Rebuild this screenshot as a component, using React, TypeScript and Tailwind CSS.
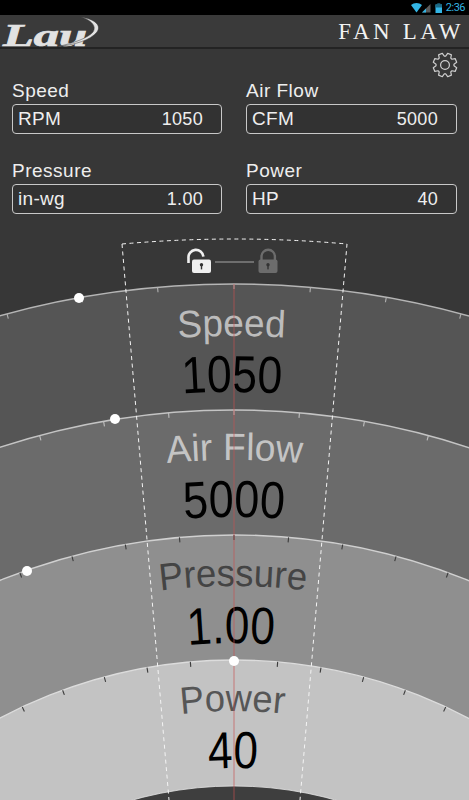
const CX = 234;
const CY = 1161;

const BANDS = [
  { r: 877, fill: "#555555", line: "#b5b5b5", tick: "#b0b0b0", label: "Speed", value: "1050", labelColor: "#bcbcbc", lb: 336, vb: 392, dot: [79, 298], lw: 107, vw: 99, lc: 231.5, vc: 232 },
  { r: 751, fill: "#6b6b6b", line: "#c4c4c4", tick: "#c0c0c0", label: "Air Flow", value: "5000", labelColor: "#c4c4c4", lb: 460, vb: 517, dot: [115, 419], lw: 135, vw: 100, lc: 234.5, vc: 234 },
  { r: 626, fill: "#8f8f8f", line: "#d0d0d0", tick: "#3c3c3c", label: "Pressure", value: "1.00", labelColor: "#444444", lb: 586, vb: 643, dot: [27, 571], lw: 146, vw: 86, lc: 233, vc: 231 },
  { r: 501, fill: "#c3c3c3", line: "#dcdcdc", tick: "#3c3c3c", label: "Power", value: "40", labelColor: "#565656", lb: 711, vb: 768, dot: [234, 661], lw: 103, vw: 49, lc: 232.5, vc: 233 },
];

function ticks(r: number) {
  const out: { x1: number; y1: number; x2: number; y2: number }[] = [];
  for (let d = -45; d <= 45; d += 5) {
    const a = (d * Math.PI) / 180;
    const s = Math.sin(a);
    const c = Math.cos(a);
    out.push({ x1: CX + r * s, y1: CY - r * c, x2: CX + (r - 5) * s, y2: CY - (r - 5) * c });
  }
  return out;
}

function arcPath(r: number) {
  const a = (40 * Math.PI) / 180;
  const s = r * Math.sin(a);
  const c = r * Math.cos(a);
  return `M ${CX - s} ${CY - c} A ${r} ${r} 0 0 1 ${CX + s} ${CY - c}`;
}

function rot(center: number, baseline: number) {
  const deg = (Math.atan((center - CX) / (CY - baseline)) * 180) / Math.PI;
  return `rotate(${deg} ${CX} ${CY})`;
}

function gearPath(cx: number, cy: number) {
  const teeth = 8;
  const ro = 12;
  const ri = 9;
  let d = "";
  for (let i = 0; i < teeth; i++) {
    const base = (i * 2 * Math.PI) / teeth + Math.PI / 8;
    const pts: [number, number][] = [
      [ri, base - 0.3],
      [ro, base - 0.17],
      [ro, base + 0.17],
      [ri, base + 0.3],
    ];
    pts.forEach(([r, a], j) => {
      const x = (cx + r * Math.cos(a)).toFixed(2);
      const y = (cy + r * Math.sin(a)).toFixed(2);
      d += `${i === 0 && j === 0 ? "M" : "L"}${x} ${y} `;
    });
  }
  return d + "Z";
}

function Field({ label, unit, value }: { label: string; unit: string; value: string }) {
  return (
    <div>
      <div className="h-6 text-[19px] leading-[22px] tracking-[0.5px] text-[#eeeeee] [font-family:'Liberation_Sans',sans-serif]">{label}</div>
      <div className="flex h-[30px] items-center justify-between rounded-[4px] border-[1.5px] border-[#c8c8c8] bg-[#323232] pl-[5px] pr-[18px] text-[#eeeeee] [font-family:'Liberation_Sans',sans-serif]">
        <span className="text-[19px] tracking-[0.3px]">{unit}</span>
        <span className="text-[18px] tracking-[0.3px]">{value}</span>
      </div>
    </div>
  );
}

function Lock({ open, color, hole }: { open: boolean; color: string; hole: string }) {
  return open ? (
    <g>
      <path d="M188.5 263 v-5 a7.4 7.4 0 0 1 14.8 -1.4" fill="none" stroke={color} strokeWidth="2.6" />
      <rect x="192" y="259.5" width="19" height="13.5" rx="2" fill={color} />
      <circle cx="201.5" cy="264.8" r="1.7" fill={hole} />
      <rect x="200.8" y="265" width="1.4" height="4.4" fill={hole} />
    </g>
  ) : (
    <g>
      <path d="M261.5 260 v-3.5 a6.7 6.7 0 0 1 13.4 0 V260" fill="none" stroke={color} strokeWidth="2.4" />
      <rect x="258.5" y="259.5" width="19" height="13.5" rx="2" fill={color} />
      <circle cx="268" cy="264.8" r="1.7" fill={hole} />
      <rect x="267.3" y="265" width="1.4" height="4.4" fill={hole} />
    </g>
  );
}

export default function App() {
  return (
    <div className="flex h-[800px] w-[469px] flex-col overflow-hidden bg-[#373737]">
      {/* status bar */}
      <div className="relative z-10 flex h-[15px] items-center justify-end gap-[3px] bg-black pr-[4px]">
        <svg width="32" height="13" viewBox="0 0 32 13">
          <path d="M0 4 A8.5 8.5 0 0 1 11 4 L5.5 11.5 Z" fill="#33b5e5" />
          <path d="M19.5 3 V11.5 H11 Z" fill="#5a5a5a" />
          <path d="M15 11.5 H11 L15 7.5 Z" fill="#33b5e5" />
          <rect x="24.5" y="3.5" width="6.5" height="8.5" fill="#33b5e5" />
          <rect x="24.5" y="3.5" width="6.5" height="3" fill="#1d6a86" />
          <rect x="26.3" y="2.3" width="3" height="1.2" fill="#1d6a86" />
        </svg>
        <span className="text-[11px] leading-none tracking-[-0.5px] text-[#33b5e5] [font-family:Roboto,sans-serif]">2:36</span>
      </div>

      {/* title bar */}
      <div className="flex h-[34px] items-center justify-between border-b-2 border-[#232323] bg-[#3a3a3a] pr-[5px]">
        <svg width="102" height="46" viewBox="0 8 102 46" className="-my-[7px] shrink-0">
          <text x="3" y="46" fontFamily="'Liberation Serif', serif" fontWeight="700" fontStyle="italic" fontSize="31" fill="#e2e2e2" stroke="#e2e2e2" strokeWidth="0.7" textLength="84" lengthAdjust="spacingAndGlyphs">
            Lau
          </text>
          <path d="M81 17 C94 19 102 25 97 32 C91 40 74 45 58 46.5 C74 43 88 38 93 32 C97 26 91 20 81 17 Z" fill="#e2e2e2" stroke="#3a3a3a" strokeWidth="0.5" />
        </svg>
        <span className="text-[23px] leading-none tracking-[3.6px] text-[#f2f2f2] [font-family:'Liberation_Serif',serif]">FAN LAW</span>
      </div>

      {/* gear */}
      <div className="flex h-[31px] items-center justify-end pr-[11px]">
        <svg width="26" height="26" viewBox="0 0 26 26">
          <path d={gearPath(13, 13)} fill="none" stroke="#d0d0d0" strokeWidth="1.2" strokeLinejoin="round" />
          <circle cx="13" cy="13" r="4.4" fill="none" stroke="#d0d0d0" strokeWidth="1.2" />
        </svg>
      </div>

      {/* fields */}
      <div className="grid grid-cols-[210px_211px] gap-x-6 gap-y-[26px] px-3">
        <Field label="Speed" unit="RPM" value="1050" />
        <Field label="Air Flow" unit="CFM" value="5000" />
        <Field label="Pressure" unit="in-wg" value="1.00" />
        <Field label="Power" unit="HP" value="40" />
      </div>

      {/* dial */}
      <svg width="469" height="564" viewBox="0 236 469 564" className="mt-[22px] block shrink-0" fontFamily="'Liberation Sans', Arial, sans-serif">
        <defs>
          {BANDS.map((b) => (
            <g key={b.label}>
              <path id={`l-${b.r}`} d={arcPath(CY - b.lb)} />
              <path id={`v-${b.r}`} d={arcPath(CY - b.vb)} />
            </g>
          ))}
        </defs>

        {BANDS.map((b) => (
          <g key={b.r}>
            <circle cx={CX} cy={CY} r={b.r} fill={b.fill} stroke={b.line} strokeWidth="1.4" />
            {ticks(b.r).map((t, i) => (
              <line key={i} {...t} stroke={b.tick} strokeWidth="1.1" />
            ))}
          </g>
        ))}
        <circle cx={CX} cy={CY} r="375" fill="#3e3e3e" stroke="#e4e4e4" strokeWidth="0.8" />

        {BANDS.map((b) => (
          <g key={b.label} textAnchor="middle">
            <g transform={rot(b.lc, b.lb)}>
              <text fontSize="38" fill={b.labelColor}>
                <textPath href={`#l-${b.r}`} startOffset="50%" textLength={b.lw} lengthAdjust="spacingAndGlyphs">
                  {b.label}
                </textPath>
              </text>
            </g>
            <g transform={rot(b.vc, b.vb)}>
              <text fontSize="52" fill="#000000">
                <textPath href={`#v-${b.r}`} startOffset="50%" textLength={b.vw} lengthAdjust="spacingAndGlyphs">
                  {b.value}
                </textPath>
              </text>
            </g>
          </g>
        ))}

        <line x1="234" y1="284" x2="234" y2="800" stroke="#c85050" strokeOpacity="0.65" strokeWidth="1" />

        <path d="M122 244 Q234.5 234 347 244 L300 800 M122 244 L169 800" fill="none" stroke="#f4f4f4" strokeWidth="1" strokeDasharray="4 3.5" />

        {BANDS.map((b) => (
          <circle key={b.r} cx={b.dot[0]} cy={b.dot[1]} r="5" fill="#ffffff" />
        ))}

        <Lock open color="#f0f0f0" hole="#333333" />
        <line x1="215" y1="262" x2="254" y2="262" stroke="#6e6e6e" strokeWidth="2" />
        <Lock open={false} color="#6c6c6c" hole="#333333" />
      </svg>
    </div>
  );
}
